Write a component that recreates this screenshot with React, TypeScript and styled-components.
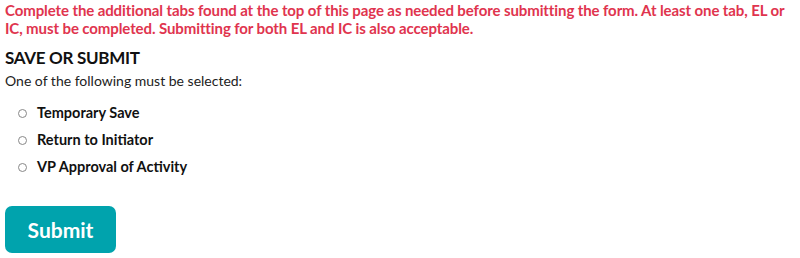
import React, { useState } from 'react';
import styled, { createGlobalStyle } from 'styled-components';

const options = ['Temporary Save', 'Return to Initiator', 'VP Approval of Activity'];

function App() {
  const [selected, setSelected] = useState<string | null>(null);

  return (
    <Container>
      <Warning>
        Complete the additional tabs found at the top of this page as needed before submitting the
        form. At least one tab, EL or IC, must be completed. Submitting for both EL and IC is also
        acceptable.
      </Warning>
      <Heading>SAVE OR SUBMIT</Heading>
      <Hint>One of the following must be selected:</Hint>
      <OptionList>
        {options.map((item) => (
          <OptionRow key={item}>
            <Radio
              type="radio"
              name="action"
              checked={selected === item}
              onChange={() => setSelected(item)}
            />
            {item}
          </OptionRow>
        ))}
      </OptionList>
      <SubmitButton type="button">Submit</SubmitButton>
      <GlobalStyle />
    </Container>
  );
}

export default App;

const Container = styled.main`
  width: 800px;
  height: 258px;
  padding: 1px 5px 0;
  display: flex;
  flex-direction: column;
  align-items: flex-start;
`;
const Warning = styled.p`
  max-width: 785px;
  color: #e0344e;
  font-weight: 700;
  font-size: 15px;
  line-height: 18px;
  letter-spacing: -0.1px;
`;
const Heading = styled.h2`
  margin-top: 11px;
  font-size: 17px;
  font-weight: 700;
  line-height: 20px;
  color: #111;
  letter-spacing: -0.3px;
`;
const Hint = styled.p`
  margin-top: 4px;
  font-size: 14px;
  line-height: 18px;
  color: #222;
`;
const OptionList = styled.div`
  margin-top: 14px;
  display: flex;
  flex-direction: column;
  gap: 9px;
`;
const OptionRow = styled.label`
  display: flex;
  align-items: center;
  gap: 10px;
  padding-left: 13px;
  font-size: 14.5px;
  font-weight: 700;
  line-height: 18px;
  color: #111;
  cursor: pointer;
`;
const Radio = styled.input`
  appearance: none;
  width: 9px;
  height: 9px;
  margin: 1px 0 0;
  border: 1px solid #888;
  border-radius: 50%;
  background: #fff;
  &:checked {
    background: radial-gradient(circle, #333 40%, #fff 45%);
  }
`;
const SubmitButton = styled.button`
  margin-top: 30px;
  width: 111px;
  height: 47px;
  border: none;
  border-radius: 7px;
  background-color: #00a3ad;
  color: #fff;
  font-family: inherit;
  font-size: 21px;
  font-weight: 700;
  cursor: pointer;
`;
const GlobalStyle = createGlobalStyle`
*,
*::before,
*::after {
  margin: 0;
  padding: 0;
  box-sizing: border-box;
}
body {
  font-family: Lato, "Open Sans", Arial, sans-serif;
  background: #fff;
}
`;
